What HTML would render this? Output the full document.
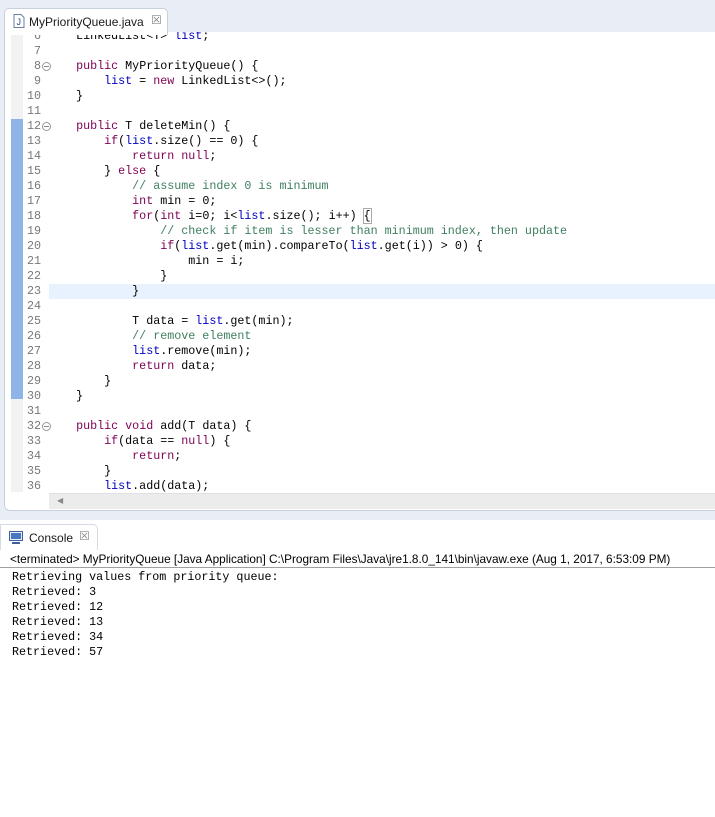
<!DOCTYPE html>
<html><head><style>
body{margin:0;width:715px;height:817px;background:#fff;position:relative;overflow:hidden;font-family:"Liberation Sans",sans-serif}
.top{position:absolute;left:0;top:0;width:715px;height:520px;background:#e9eef6}
.tab{position:absolute;left:4px;top:8px;width:162px;height:26px;background:#fff;border:1px solid #c8d0dc;border-bottom:none;border-radius:5px 5px 0 0;font-size:12px}
.ed{position:absolute;left:4px;top:32px;width:711px;height:478px;background:#fff;border-left:1px solid #c8d0dc;border-bottom:1px solid #c8d0dc;border-radius:0 0 0 6px;overflow:hidden}
.code{position:absolute;left:0;top:-3px;font-family:"Liberation Mono",monospace;font-size:11.7px;line-height:15px;white-space:pre}
.ln{position:absolute;left:0;width:711px;height:15px}
.num{position:absolute;left:14px;width:22px;text-align:right;color:#787878}
.tx{position:absolute;left:43px}
.k{color:#7f0055}.f{color:#0000c0}.c{color:#3f7f5f}
.hl{background:#e8f2fe}
.bar{position:absolute;left:6px;top:87px;width:12px;height:280px;background:#8fb4e8}
.gut{position:absolute;left:6px;top:0;width:12px;height:460px;background:#f2f2f2}
.fold{display:inline-block;width:7px;height:7px;border:1px solid #999;border-radius:50%;position:absolute;left:37px;top:3px;font-size:0}
.fold:after{content:"";position:absolute;left:1px;top:3px;width:5px;height:1px;background:#888}
.hs{position:absolute;left:44px;top:461px;width:667px;height:15px;background:#ececec;border-top:1px solid #e0e0e0}
.ctab{position:absolute;left:0;top:524px;width:96px;height:25px;background:#fff;border:1px solid #d4dbe6;border-bottom:none;border-radius:0 5px 0 0;font-size:12px}
.out{position:absolute;left:12px;top:570px;font-family:"Liberation Mono",monospace;font-size:11.7px;line-height:15px;white-space:pre}
</style></head><body>
<div class="top"></div>
<div class="ed">
<div class="gut"></div><div class="bar"></div>
<div class="code">
<div class="ln" style="top:0"><span class="num">6</span><span class="tx">    LinkedList&lt;T&gt; <span class="f">list</span>;</span></div>
<div class="ln" style="top:15px"><span class="num">7</span></div>
<div class="ln" style="top:30px"><span class="num">8</span><span class="fold"></span><span class="tx">    <span class="k">public</span> MyPriorityQueue() {</span></div>
<div class="ln" style="top:45px"><span class="num">9</span><span class="tx">        <span class="f">list</span> = <span class="k">new</span> LinkedList&lt;&gt;();</span></div>
<div class="ln" style="top:60px"><span class="num">10</span><span class="tx">    }</span></div>
<div class="ln" style="top:75px"><span class="num">11</span></div>
<div class="ln" style="top:90px"><span class="num">12</span><span class="fold"></span><span class="tx">    <span class="k">public</span> T deleteMin() {</span></div>
<div class="ln" style="top:105px"><span class="num">13</span><span class="tx">        <span class="k">if</span>(<span class="f">list</span>.size() == 0) {</span></div>
<div class="ln" style="top:120px"><span class="num">14</span><span class="tx">            <span class="k">return</span> <span class="k">null</span>;</span></div>
<div class="ln" style="top:135px"><span class="num">15</span><span class="tx">        } <span class="k">else</span> {</span></div>
<div class="ln" style="top:150px"><span class="num">16</span><span class="tx">            <span class="c">// assume index 0 is minimum</span></span></div>
<div class="ln" style="top:165px"><span class="num">17</span><span class="tx">            <span class="k">int</span> min = 0;</span></div>
<div class="ln" style="top:180px"><span class="num">18</span><span class="tx">            <span class="k">for</span>(<span class="k">int</span> i=0; i&lt;<span class="f">list</span>.size(); i++) <span style="outline:1px solid #aaa">{</span></span></div>
<div class="ln" style="top:195px"><span class="num">19</span><span class="tx">                <span class="c">// check if item is lesser than minimum index, then update</span></span></div>
<div class="ln" style="top:210px"><span class="num">20</span><span class="tx">                <span class="k">if</span>(<span class="f">list</span>.get(min).compareTo(<span class="f">list</span>.get(i)) &gt; 0) {</span></div>
<div class="ln" style="top:225px"><span class="num">21</span><span class="tx">                    min = i;</span></div>
<div class="ln" style="top:240px"><span class="num">22</span><span class="tx">                }</span></div>
<div class="ln" style="top:255px"><span class="hl" style="position:absolute;left:44px;width:667px;height:15px"></span><span class="num">23</span><span class="tx">            }</span></div>
<div class="ln" style="top:270px"><span class="num">24</span></div>
<div class="ln" style="top:285px"><span class="num">25</span><span class="tx">            T data = <span class="f">list</span>.get(min);</span></div>
<div class="ln" style="top:300px"><span class="num">26</span><span class="tx">            <span class="c">// remove element</span></span></div>
<div class="ln" style="top:315px"><span class="num">27</span><span class="tx">            <span class="f">list</span>.remove(min);</span></div>
<div class="ln" style="top:330px"><span class="num">28</span><span class="tx">            <span class="k">return</span> data;</span></div>
<div class="ln" style="top:345px"><span class="num">29</span><span class="tx">        }</span></div>
<div class="ln" style="top:360px"><span class="num">30</span><span class="tx">    }</span></div>
<div class="ln" style="top:375px"><span class="num">31</span></div>
<div class="ln" style="top:390px"><span class="num">32</span><span class="fold"></span><span class="tx">    <span class="k">public</span> <span class="k">void</span> add(T data) {</span></div>
<div class="ln" style="top:405px"><span class="num">33</span><span class="tx">        <span class="k">if</span>(data == <span class="k">null</span>) {</span></div>
<div class="ln" style="top:420px"><span class="num">34</span><span class="tx">            <span class="k">return</span>;</span></div>
<div class="ln" style="top:435px"><span class="num">35</span><span class="tx">        }</span></div>
<div class="ln" style="top:450px"><span class="num">36</span><span class="tx">        <span class="f">list</span>.add(data);</span></div>
</div>
<div class="hs"><span style="position:absolute;left:8px;top:2px;font-size:8px;color:#888">◀</span></div>
</div>
<div class="tab">
<svg style="position:absolute;left:8px;top:5px" width="12" height="14" viewBox="0 0 12 14"><path d="M1 .5h7l3 3v10H1z" fill="#fff" stroke="#6b7fa6"/><text x="3.5" y="11" font-size="9" font-family="Liberation Sans" fill="#2a4b8d">J</text></svg>
<span style="position:absolute;left:24px;top:6px;color:#1a1a1a">MyPriorityQueue.java</span>
<span style="position:absolute;left:146px;top:4px;color:#888;font-size:12px">☒</span>
</div>
<div class="ctab">
<svg style="position:absolute;left:8px;top:6px" width="14" height="13" viewBox="0 0 14 13"><rect x=".5" y=".5" width="13" height="9" fill="#e8eef8" stroke="#3a5f9a"/><rect x="2" y="2" width="10" height="6" fill="#4a78c0"/><path d="M3 12h8" stroke="#3a5f9a" stroke-width="2"/></svg>
<span style="position:absolute;left:28px;top:6px;color:#1a1a1a">Console</span>
<span style="position:absolute;left:78px;top:4px;color:#888;font-size:12px">☒</span>
</div>
<div style="position:absolute;left:0;top:549px;width:715px;height:18px;border-bottom:1px solid #a0a0a0;font-size:11.8px;line-height:20px;padding-left:10px;color:#000;white-space:nowrap">&lt;terminated&gt; MyPriorityQueue [Java Application] C:\Program Files\Java\jre1.8.0_141\bin\javaw.exe (Aug 1, 2017, 6:53:09 PM)</div>
<div class="out">Retrieving values from priority queue:
Retrieved: 3
Retrieved: 12
Retrieved: 13
Retrieved: 34
Retrieved: 57</div>
</body></html>
